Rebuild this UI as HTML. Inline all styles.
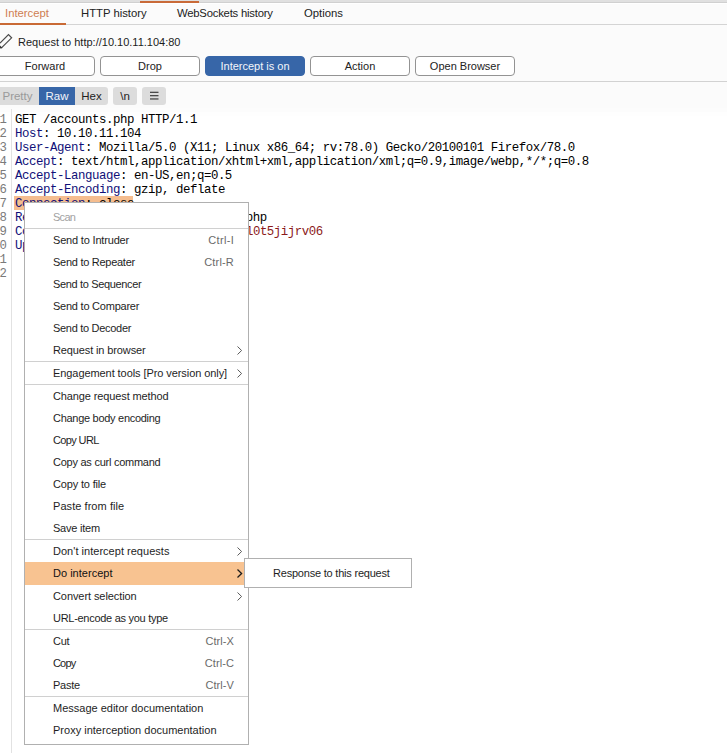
<!DOCTYPE html>
<html><head><meta charset="utf-8">
<style>
*{margin:0;padding:0;box-sizing:border-box}
html,body{width:727px;height:753px;overflow:hidden;background:#fbfbfb;font-family:"Liberation Sans",sans-serif;font-size:11px;color:#1e1e1e}
.abs{position:absolute}
#topbar{left:0;top:0;width:727px;height:4px;background:#e0e0e0;border-bottom:1px solid #fff}
#topbar2{left:0;top:2px;width:727px;height:1px;background:#d0d0d0}
#toporange{left:140px;top:1px;width:59px;height:2px;background:#c96a38}
.tab{position:absolute;top:6px;font-size:11.3px;line-height:14px;white-space:nowrap;color:#222}
#tabline{left:0;top:24px;width:727px;height:1px;background:#d4d4d4}
#tabul{left:0;top:23px;width:66px;height:2px;background:#c96a35}
#req{left:18px;top:35px;line-height:14px;white-space:nowrap;color:#1c1c1c}
.btn{position:absolute;top:56px;width:100px;height:20px;border:1px solid #939393;border-radius:4px;background:#fff;text-align:center;line-height:18px;white-space:nowrap;color:#222}
.btn.on{background:#3766a8;border-color:#3766a8;color:#f4f6fa}
#sep1{left:0;top:81px;width:727px;height:1px;background:#d2d2d2}
.seg{position:absolute;top:87px;height:18px;line-height:18px;text-align:center;font-size:11.5px}
#code{left:0;top:108px;width:727px;height:645px;background:linear-gradient(#fcfcfc 0,#fcfcfc 4px,#fefefe 4px,#fefefe 8px,#fff 8px)}
#gutline{left:11px;top:109px;width:1px;height:644px;background:#e2e2e2}
.ln{position:absolute;left:-8px;width:15px;text-align:right;font-family:"Liberation Mono",monospace;font-size:12.3px;line-height:14px;color:#7a7a7a}
.cl{position:absolute;left:15px;font-family:"Liberation Mono",monospace;font-size:12.4px;letter-spacing:-0.44px;line-height:14px;white-space:pre;color:#000}
.h{color:#101078}
.r{color:#8b1a1a}
#menu{left:24px;top:202px;width:225px;height:543px;background:#fff;border:1px solid #b0b0b0;padding:3px 0}
.mi{position:relative;height:22px;line-height:22px;padding-left:28px;white-space:nowrap;color:#1e1e1e}
.mi.dis{color:#a2a2a2}
.mi.hl{background:#f8c391;color:#111;height:23px}
.ms{height:1px;background:#d0d0d0}
.sc{position:absolute;right:14px;top:0;color:#6a6a6a}
.ar{position:absolute;left:212px;top:7px;width:6px;height:9px}
#sub{left:244px;top:558px;width:168px;height:30px;background:#fff;border:1px solid #b0b0b0;padding:3px 0}
</style></head><body>
<div id="topbar" class="abs"></div>
<div id="topbar2" class="abs"></div>
<div id="toporange" class="abs"></div>
<div class="tab" style="left:5px;color:#cf7d52">Intercept</div>
<div class="tab" style="left:81px">HTTP history</div>
<div class="tab" style="left:177px;letter-spacing:-0.22px">WebSockets history</div>
<div class="tab" style="left:304px">Options</div>
<div id="tabline" class="abs"></div>
<div id="tabul" class="abs"></div>

<svg class="abs" style="left:0;top:33px" width="14" height="16" viewBox="0 33 14 16">
<polyline points="0,43.2 8.5,34.7 11.6,37.8 1.2,48.2" fill="none" stroke="#4a4a4a" stroke-width="1.2"/><polygon points="0,45.5 2.5,48 0,48.5" fill="#333"/>
</svg>
<div id="req" class="abs">Request to http://10.10.11.104:80</div>

<div class="btn" style="left:-5px">Forward</div>
<div class="btn" style="left:100px">Drop</div>
<div class="btn on" style="left:205px">Intercept is on</div>
<div class="btn" style="left:310px">Action</div>
<div class="btn" style="left:415px">Open Browser</div>
<div id="sep1" class="abs"></div>

<div class="seg" style="left:-4px;width:43px;background:#dcdcdc;color:#9a9a9a">Pretty</div>
<div class="seg" style="left:39px;width:36px;background:#3766a8;color:#f2f4f8">Raw</div>
<div class="seg" style="left:75px;width:33px;background:#dcdcdc;color:#1e1e1e;border-radius:0 3px 3px 0">Hex</div>
<div class="seg" style="left:113px;width:24px;background:#dcdcdc;color:#1e1e1e;border-radius:3px">\n</div>
<div class="seg" style="left:142px;width:24px;background:#dcdcdc;border-radius:3px">
<svg style="position:absolute;left:8px;top:4px" width="9" height="9"><rect x="-0.3" y="0.7" width="8.8" height="1.3" fill="#4a4a4a"/><rect x="-0.3" y="4" width="8.8" height="1.3" fill="#4a4a4a"/><rect x="-0.3" y="7.3" width="8.8" height="1.3" fill="#4a4a4a"/></svg>
</div>

<div id="code" class="abs"></div>
<div id="gutline" class="abs"></div>
<div class="abs" style="left:14px;top:196px;width:119px;height:14px;background:#f5bd8f"></div>

<div class="ln" style="top:113px">1</div>
<div class="ln" style="top:127px">2</div>
<div class="ln" style="top:141px">3</div>
<div class="ln" style="top:155px">4</div>
<div class="ln" style="top:169px">5</div>
<div class="ln" style="top:183px">6</div>
<div class="ln" style="top:197px">7</div>
<div class="ln" style="top:211px">8</div>
<div class="ln" style="top:225px">9</div>
<div class="ln" style="top:239px">10</div>
<div class="ln" style="top:253px">11</div>
<div class="ln" style="top:267px">12</div>

<div class="cl" style="top:113px">GET /accounts.php HTTP/1.1</div>
<div class="cl" style="top:127px"><span class="h">Host</span>: 10.10.11.104</div>
<div class="cl" style="top:141px"><span class="h">User-Agent</span>: Mozilla/5.0 (X11; Linux x86_64; rv:78.0) Gecko/20100101 Firefox/78.0</div>
<div class="cl" style="top:155px"><span class="h">Accept</span>: text/html,application/xhtml+xml,application/xml;q=0.9,image/webp,*/*;q=0.8</div>
<div class="cl" style="top:169px"><span class="h">Accept-Language</span>: en-US,en;q=0.5</div>
<div class="cl" style="top:183px"><span class="h">Accept-Encoding</span>: gzip, deflate</div>
<div class="cl" style="top:197px"><span class="h">Connection</span>: close</div>
<div class="cl" style="top:211px"><span class="h">Referer</span>: http://10.10.11.104/ads.php</div>
<div class="cl" style="top:225px"><span class="h">Cookie</span>: <span class="h">PHPSESSID</span>=<span class="r">k3b7c2d9e4f1a8ml0t5jijrv06</span></div>
<div class="cl" style="top:239px"><span class="h">Upgrade-Insecure-Requests</span>: 1</div>

<div id="menu" class="abs">
<div class="mi dis"><span style="letter-spacing:-0.718px">Scan</span></div>
<div class="ms"></div>
<div class="mi"><span style="letter-spacing:-0.181px">Send to Intruder</span><span class="sc" style="letter-spacing:0.306px">Ctrl-I</span></div>
<div class="mi"><span style="letter-spacing:-0.271px">Send to Repeater</span><span class="sc" style="letter-spacing:0.186px">Ctrl-R</span></div>
<div class="mi"><span style="letter-spacing:-0.351px">Send to Sequencer</span></div>
<div class="mi"><span style="letter-spacing:-0.234px">Send to Comparer</span></div>
<div class="mi"><span style="letter-spacing:-0.299px">Send to Decoder</span></div>
<div class="mi"><span style="letter-spacing:-0.124px">Request in browser</span><svg class="ar" viewBox="0 0 6 9"><polyline points="0.5,0.5 4.6,4.5 0.5,8.5" fill="none" stroke="#5a5a5a" stroke-width="1"/></svg></div>
<div class="ms"></div>
<div class="mi"><span style="letter-spacing:-0.075px">Engagement tools [Pro version only]</span><svg class="ar" viewBox="0 0 6 9"><polyline points="0.5,0.5 4.6,4.5 0.5,8.5" fill="none" stroke="#5a5a5a" stroke-width="1"/></svg></div>
<div class="ms"></div>
<div class="mi"><span style="letter-spacing:-0.12px">Change request method</span></div>
<div class="mi"><span style="letter-spacing:-0.286px">Change body encoding</span></div>
<div class="mi"><span style="letter-spacing:-0.632px">Copy URL</span></div>
<div class="mi"><span style="letter-spacing:-0.251px">Copy as curl command</span></div>
<div class="mi"><span style="letter-spacing:-0.164px">Copy to file</span></div>
<div class="mi"><span style="letter-spacing:0.058px">Paste from file</span></div>
<div class="mi"><span style="letter-spacing:-0.218px">Save item</span></div>
<div class="ms"></div>
<div class="mi"><span style="letter-spacing:0.025px">Don&#39;t intercept requests</span><svg class="ar" viewBox="0 0 6 9"><polyline points="0.5,0.5 4.6,4.5 0.5,8.5" fill="none" stroke="#5a5a5a" stroke-width="1"/></svg></div>
<div class="mi hl"><span style="letter-spacing:0.014px">Do intercept</span><svg class="ar" viewBox="0 0 6 9"><polyline points="0.5,0.5 4.6,4.5 0.5,8.5" fill="none" stroke="#1a1a1a" stroke-width="1.3"/></svg></div>
<div class="mi"><span style="letter-spacing:-0.079px">Convert selection</span><svg class="ar" viewBox="0 0 6 9"><polyline points="0.5,0.5 4.6,4.5 0.5,8.5" fill="none" stroke="#5a5a5a" stroke-width="1"/></svg></div>
<div class="mi"><span style="letter-spacing:-0.283px">URL-encode as you type</span></div>
<div class="ms"></div>
<div class="mi"><span style="letter-spacing:-0.281px">Cut</span><span class="sc" style="letter-spacing:0.086px">Ctrl-X</span></div>
<div class="mi"><span style="letter-spacing:-0.826px">Copy</span><span class="sc" style="letter-spacing:0.086px">Ctrl-C</span></div>
<div class="mi"><span style="letter-spacing:-0.253px">Paste</span><span class="sc" style="letter-spacing:0.086px">Ctrl-V</span></div>
<div class="ms"></div>
<div class="mi"><span style="letter-spacing:-0.004px">Message editor documentation</span></div>
<div class="mi"><span style="letter-spacing:0.008px">Proxy interception documentation</span></div>
</div>

<div id="sub" class="abs">
<div class="mi"><span style="letter-spacing:-0.21px">Response to this request</span></div>
</div>
</body></html>
